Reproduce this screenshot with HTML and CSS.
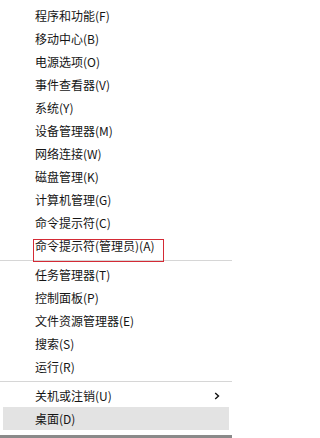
FILE: index.html
```html
<!DOCTYPE html>
<html lang="zh-CN">
<head>
<meta charset="utf-8">
<link rel="stylesheet" href="styles.css">
</head>
<body>
<div class="menu">
  <div class="group">
    <div class="item">程序和功能(F)</div>
    <div class="item">移动中心(B)</div>
    <div class="item">电源选项(O)</div>
    <div class="item">事件查看器(V)</div>
    <div class="item">系统(Y)</div>
    <div class="item">设备管理器(M)</div>
    <div class="item">网络连接(W)</div>
    <div class="item">磁盘管理(K)</div>
    <div class="item">计算机管理(G)</div>
    <div class="item">命令提示符(C)</div>
    <div class="item">命令提示符(管理员)(A)</div>
  </div>
  <div class="sep"></div>
  <div class="group">
    <div class="item">任务管理器(T)</div>
    <div class="item">控制面板(P)</div>
    <div class="item">文件资源管理器(E)</div>
    <div class="item">搜索(S)</div>
    <div class="item">运行(R)</div>
  </div>
  <div class="sep"></div>
  <div class="group">
    <div class="item sub">关机或注销(U)
      <svg class="chev" width="6" height="8" viewBox="0 0 6 8"><polyline points="1.2,1 4.5,4 1.2,7" fill="none" stroke="#111" stroke-width="1.4"/></svg>
    </div>
    <div class="item active">桌面(D)</div>
  </div>
  <div class="taskbar"></div>
  <div class="mark"></div>
</div>
</body>
</html>
```

FILE: styles.css
```css
html, body {
  margin: 0;
  padding: 0;
  background: #ffffff;
}
body {
  font-family: "Noto Sans CJK SC", "Noto Sans", "Liberation Sans", sans-serif;
  font-size: 12px;
  color: #151515;
}
.menu {
  position: relative;
  width: 232px;
  height: 438px;
  padding-top: 4px;
  box-sizing: border-box;
  display: flex;
  flex-direction: column;
}
.group {
  display: flex;
  flex-direction: column;
}
.item {
  height: 23px;
  line-height: 23px;
  padding-left: 35px;
  white-space: nowrap;
  display: flex;
  align-items: center;
}
.item.sub {
  padding-right: 12px;
  justify-content: space-between;
}
.item.active {
  background: #e3e3e3;
  margin: 0 3px;
  padding-left: 32px;
}
.sep {
  height: 1px;
  background: #d6d6d6;
  margin: 3px 0 2px;
}
.taskbar {
  margin-top: auto;
  height: 3px;
  background: #8a8a8a;
}
.mark {
  position: absolute;
  left: 33px;
  top: 239px;
  width: 129px;
  height: 21px;
  border: 1px solid #d42a35;
}
```
